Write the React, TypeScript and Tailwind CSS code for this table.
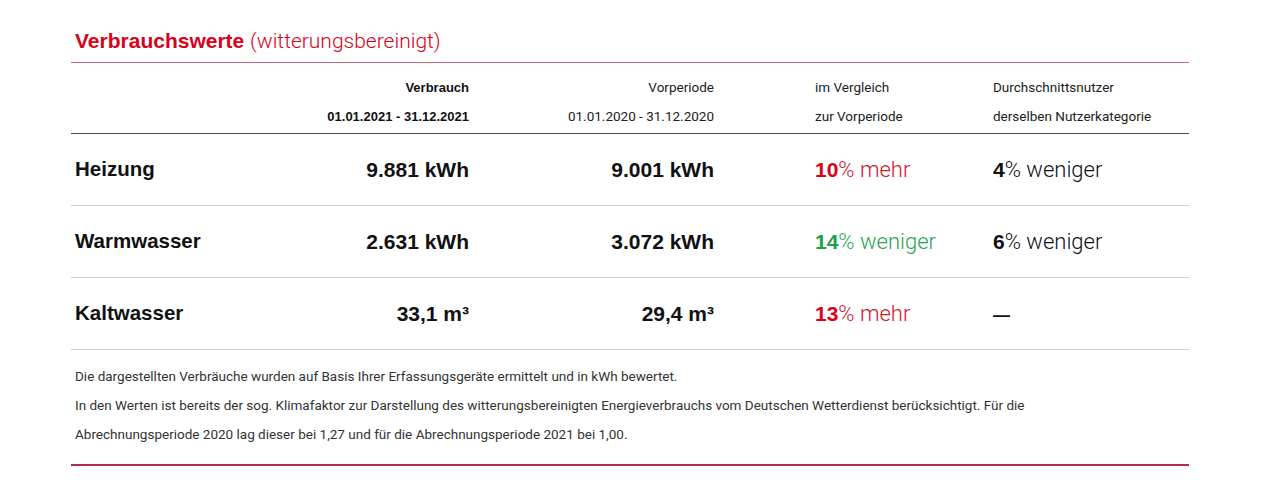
import React from 'react'

const rows = [
  { label: 'Heizung', cur: '9.881 kWh', prev: '9.001 kWh', cmp: '10', cmpText: 'mehr', numColor: 'text-[#dc0018]', txtColor: 'text-[#c8202e]', avg: '4', avgText: 'weniger' },
  { label: 'Warmwasser', cur: '2.631 kWh', prev: '3.072 kWh', cmp: '14', cmpText: 'weniger', numColor: 'text-[#1c9e4b]', txtColor: 'text-[#2aa457]', avg: '6', avgText: 'weniger' },
  { label: 'Kaltwasser', cur: '33,1 m³', prev: '29,4 m³', cmp: '13', cmpText: 'mehr', numColor: 'text-[#dc0018]', txtColor: 'text-[#c8202e]', avg: null, avgText: '' },
]

const sans = "font-['Liberation_Sans',Arial,sans-serif]"
const thin = "font-['Roboto',sans-serif]"

const App = () => {
  return (
    <div className='w-[1280px] h-[488px] bg-white pl-[71px] pr-[91px] pt-[29px] text-[#111]'>
      {/* Title */}
      <h1 className={`text-[21px] leading-[24px] text-[#d9001b] pl-[4px] ${sans}`}>
        <span className='font-bold'>Verbrauchswerte</span>{' '}
        <span className={`${thin} font-light`}>(witterungsbereinigt)</span>
      </h1>
      <div className='mt-[9px] h-px bg-[#c46a78]'></div>

      {/* Header */}
      <div className={`grid grid-cols-[190px_208px_245px_279px_1fr] text-[13.5px] leading-[29px] pt-[10px] pb-[2px] border-b-[1.5px] border-[#4a4a4a] ${thin}`}>
        <div></div>
        <div className={`text-right font-bold text-[13px] ${sans}`}>
          <div>Verbrauch</div>
          <div>01.01.2021 - 31.12.2021</div>
        </div>
        <div className='text-right text-[#222]'>
          <div>Vorperiode</div>
          <div>01.01.2020 - 31.12.2020</div>
        </div>
        <div className='pl-[101px] text-[#222]'>
          <div>im Vergleich</div>
          <div>zur Vorperiode</div>
        </div>
        <div className='text-[#222]'>
          <div>Durchschnittsnutzer</div>
          <div>derselben Nutzerkategorie</div>
        </div>
      </div>

      {/* Rows */}
      {rows.map((r) => (
        <div key={r.label} className='grid grid-cols-[190px_208px_245px_279px_1fr] items-center h-[72px] border-b border-[#cfcfcf]'>
          <div className={`pl-[4px] text-[20.5px] font-bold ${sans}`}>{r.label}</div>
          <div className={`text-right text-[21px] font-bold ${sans}`}>{r.cur}</div>
          <div className={`text-right text-[21px] font-bold ${sans}`}>{r.prev}</div>
          <div className={`pl-[101px] text-[22px] ${thin}`}>
            <span className={`font-bold text-[21px] ${r.numColor} ${sans}`}>{r.cmp}</span>
            <span className={`font-light ${r.txtColor}`}>% {r.cmpText}</span>
          </div>
          <div className={`text-[22px] ${thin}`}>
            {r.avg ? (
              <>
                <span className={`font-bold text-[21px] ${sans}`}>{r.avg}</span>
                <span className='font-light'>% {r.avgText}</span>
              </>
            ) : (
              <span className={`text-[17px] font-bold ${sans}`}>—</span>
            )}
          </div>
        </div>
      ))}

      {/* Footnotes */}
      <div className={`pl-[4px] pt-[12px] text-[13.5px] leading-[29px] text-[#333] ${thin}`}>
        <p>Die dargestellten Verbräuche wurden auf Basis Ihrer Erfassungsgeräte ermittelt und in kWh bewertet.</p>
        <p>
          In den Werten ist bereits der sog. Klimafaktor zur Darstellung des witterungsbereinigten Energieverbrauchs vom Deutschen Wetterdienst berücksichtigt. Für die
          <br />
          Abrechnungsperiode 2020 lag dieser bei 1,27 und für die Abrechnungsperiode 2021 bei 1,00.
        </p>
      </div>
      <div className='mt-[15px] h-[2px] bg-[#b3294c]'></div>
    </div>
  )
}

export default App
